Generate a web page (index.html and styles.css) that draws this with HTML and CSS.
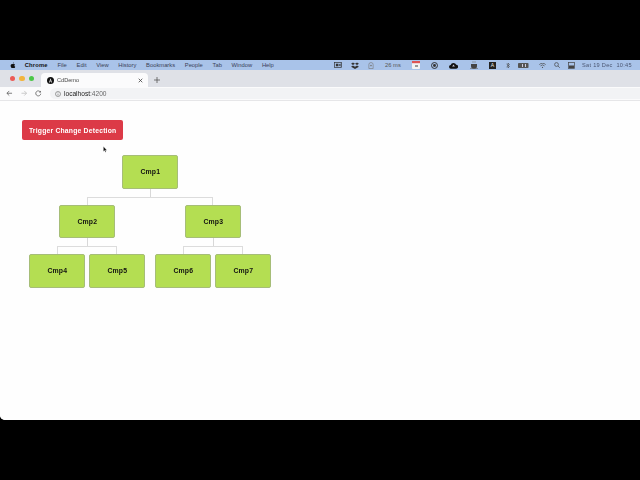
FILE: index.html
```html
<!DOCTYPE html>
<html lang="en">
<head>
<meta charset="utf-8">
<title>CdDemo</title>
<link rel="stylesheet" href="styles.css">
</head>
<body>
<div class="window">
  <header class="menubar">
    <nav class="menu">
      <svg class="apple" viewBox="0 0 14 16"><path d="M10 1c.1 1.300-1.200 2.900-2.800 2.800C7 2.500 8.500 1.100 10 1zM11.300 8.500c0-1.500 1.200-2.300 1.300-2.400-.8-1.100-2-1.300-2.400-1.300-1-.1-2 .6-2.600.6s-1.400-.6-2.300-.6C4 4.800 2.900 5.500 2.200 6.600.9 8.800 1.900 12.100 3.200 13.900c.6.900 1.300 1.900 2.300 1.900.9 0 1.300-.6 2.400-.6s1.400.6 2.400.6 1.600-.9 2.200-1.800c.7-1 1-2 1-2.100-.1 0-2.200-.8-2.200-3.400z"/></svg>
      <b class="app">Chrome</b>
      <span>File</span><span>Edit</span><span>View</span><span>History</span><span>Bookmarks</span><span>People</span><span>Tab</span><span>Window</span><span>Help</span>
    </nav>
    <div class="status">
      <svg class="s-video" viewBox="0 0 9 7"><rect x=".5" y=".5" width="8" height="6" fill="none" stroke="#333" stroke-width=".8"/><rect x="2" y="2" width="3" height="3" fill="#333"/><path d="M6 2.500l1.500-.7v3.400L6 4.500z" fill="#333"/></svg>
      <svg class="s-drop" viewBox="0 0 9 8"><path d="M2.200.5L4.500 2 2.200 3.500 0 2zM6.800.5L9 2 6.800 3.500 4.500 2zM2.200 3.900L4.500 5.300 6.800 3.900 9 5.300 4.500 8 0 5.300z" fill="#333"/></svg>
      <svg class="s-gauge" viewBox="0 0 7 8"><path d="M1 7.500V3a2.500 2.500 0 0 1 5 0v4.500z" fill="none" stroke="#777" stroke-width=".7"/><circle cx="3.500" cy="4" r="1" fill="#777"/></svg>
      <span class="ms">26 ms</span>
      <svg class="s-cal" viewBox="0 0 8 8"><rect width="8" height="8" rx="1" fill="#f4f4f4"/><rect width="8" height="2.200" fill="#d55"/><rect x="3" y="4" width="3" height="2" fill="#999"/></svg>
      <svg class="s-circle" viewBox="0 0 8 8"><circle cx="4" cy="4" r="3.400" fill="none" stroke="#222" stroke-width="1"/><circle cx="4" cy="4" r="1.700" fill="#333"/></svg>
      <svg class="s-cloud" viewBox="0 0 10 7"><path d="M2.200 7a2 2 0 0 1-.3-4A3.200 3.200 0 0 1 8 2.800 2.100 2.100 0 0 1 8 7z" fill="#111"/><path d="M5 2.500L3.500 4.500h3z" fill="#ccd"/></svg>
      <svg class="s-cup" viewBox="0 0 8 8"><path d="M1 3h6v2a3 3 0 0 1-6 0z" fill="#444"/><path d="M0 7.500h8" stroke="#666" stroke-width=".6"/><path d="M3 0v2M5 0v2" stroke="#777" stroke-width=".6"/></svg>
      <span class="s-a">A</span>
      <svg class="s-bt" viewBox="0 0 4 7"><path d="M.5 2l3 2.500L2 6V1l1.500 1.500-3 2.500" fill="none" stroke="#444" stroke-width=".6"/></svg>
      <svg class="s-batt" viewBox="0 0 11 5"><rect width="10.500" height="5" rx=".8" fill="#555"/><rect x="4" y="1" width="1" height="3" fill="#ccd"/><rect x="7" y="1" width="1" height="3" fill="#ccd"/></svg>
      <svg class="s-wifi" viewBox="0 0 7 5"><path d="M.3 1.600a4.500 4.500 0 0 1 6.400 0M1.500 2.900a2.800 2.800 0 0 1 4 0" fill="none" stroke="#444" stroke-width=".7"/><circle cx="3.500" cy="4.300" r=".6" fill="#444"/></svg>
      <svg class="s-search" viewBox="0 0 6 6"><circle cx="2.500" cy="2.500" r="1.900" fill="none" stroke="#444" stroke-width=".7"/><path d="M4 4l1.800 1.800" stroke="#444" stroke-width=".7"/></svg>
      <svg class="s-ctrl" viewBox="0 0 7 7"><rect x=".4" y=".4" width="6.200" height="6.200" fill="none" stroke="#444" stroke-width=".7"/><rect x="1" y="3.500" width="5" height="2.500" fill="#444"/></svg>
      <span class="clock">Sat 19 Dec  10:45</span>
    </div>
  </header>
  <div class="tabstrip">
    <div class="lights"><i class="red"></i><i class="amber"></i><i class="green"></i></div>
    <div class="tab">
      <svg class="favicon" viewBox="0 0 7 7"><circle cx="3.500" cy="3.500" r="3.500" fill="#111"/><path d="M3.500 1.300L2 5.500h.8l.3-.9h.9l.3.9h.8zM3.300 4l.2-.9.2.9z" fill="#eee"/></svg>
      <span class="tab-title">CdDemo</span>
      <svg class="tab-x" viewBox="0 0 5 5"><path d="M.7.7l3.600 3.600M4.300.7L.7 4.300" stroke="#444" stroke-width=".8"/></svg>
    </div>
    <svg class="tab-plus" viewBox="0 0 6 6"><path d="M3 0v6M0 3h6" stroke="#555" stroke-width=".8"/></svg>
  </div>
  <div class="toolbar">
    <svg class="nav back" viewBox="0 0 7 7"><path d="M6.500 3.500H1M3.500 1L1 3.500 3.500 6" fill="none" stroke="#555" stroke-width=".8"/></svg>
    <svg class="nav fwd" viewBox="0 0 7 7"><path d="M.5 3.500H6M3.500 1L6 3.500 3.500 6" fill="none" stroke="#bbb" stroke-width=".8"/></svg>
    <svg class="nav reload" viewBox="0 0 7 7"><path d="M5.800 2.200A2.700 2.700 0 1 0 6.200 4" fill="none" stroke="#555" stroke-width=".8"/><path d="M6.300.8v2H4.300z" fill="#555"/></svg>
    <div class="omnibox">
      <svg class="info" viewBox="0 0 6 6"><circle cx="3" cy="3" r="2.500" fill="none" stroke="#666" stroke-width=".6"/><path d="M3 2.700v1.800M3 1.500v.6" stroke="#666" stroke-width=".6"/></svg>
      <span class="url"><b>localhost</b>:4200</span>
    </div>
  </div>
  <main class="page">
    <button class="trigger">Trigger Change Detection</button>
    <div class="tree">
      <div class="branch">
        <div class="node">Cmp1</div>
        <div class="stem"></div>
        <div class="rail rail-wide"></div>
        <div class="kids kids-wide">
          <div class="branch">
            <div class="node">Cmp2</div>
            <div class="stem"></div>
            <div class="rail"></div>
            <div class="kids">
              <div class="node">Cmp4</div>
              <div class="node">Cmp5</div>
            </div>
          </div>
          <div class="branch">
            <div class="node">Cmp3</div>
            <div class="stem"></div>
            <div class="rail"></div>
            <div class="kids">
              <div class="node">Cmp6</div>
              <div class="node">Cmp7</div>
            </div>
          </div>
        </div>
      </div>
    </div>
    <svg class="cursor" viewBox="0 0 6 8"><path d="M.5.500v6l1.400-1.300 1 2.200.9-.4-1-2.100h1.900z" fill="#111" stroke="#fff" stroke-width=".3"/></svg>
  </main>
</div>
</body>
</html>
```

FILE: styles.css
```css
html, body {
  margin: 0;
  height: 100%;
  background: #000;
  overflow: hidden;
}
body {
  padding-top: 60px;
  box-sizing: border-box;
  font-family: "Liberation Sans", Arial, sans-serif;
}
.window {
  width: 640px;
  height: 360px;
  display: flex;
  flex-direction: column;
  background: #fff;
  border-radius: 0 0 0 5px;
  overflow: hidden;
  filter: blur(0.4px);
}

/* macOS menu bar */
.menubar {
  height: 10px;
  flex: none;
  background: #a9c3e9;
  display: flex;
  align-items: center;
  justify-content: space-between;
  font-size: 5.800px;
  color: #3a4258;
}
.menu {
  display: flex;
  align-items: center;
  padding-left: 10px;
  gap: 9.700px;
}
.apple { width: 5.500px; height: 6.500px; fill: #111; margin-right: -0.500px; }
.app { color: #111; letter-spacing: 0.200px; }
.status {
  display: flex;
  align-items: center;
  padding-right: 7px;
}
.status svg, .s-a { flex: none; display: block; }
.s-video { width: 8px; height: 6px; margin-right: 9px; }
.s-drop { width: 8px; height: 7px; margin-right: 9px; }
.s-gauge { width: 6px; height: 7px; margin-right: 11px; }
.ms { width: 17px; color: #555; margin-right: 10px; white-space: nowrap; }
.s-cal { width: 8px; height: 8px; margin-right: 11px; }
.s-circle { width: 7px; height: 7px; margin-right: 11px; }
.s-cloud { width: 9px; height: 7px; margin-right: 12px; }
.s-cup { width: 8px; height: 8px; margin-right: 11px; }
.s-a {
  width: 7px;
  height: 7px;
  margin-right: 10px;
  background: #222;
  color: #eee;
  font-size: 5px;
  line-height: 7px;
  text-align: center;
}
.s-bt { width: 4px; height: 7px; margin-right: 8px; }
.s-batt { width: 11px; height: 5px; margin-right: 10px; }
.s-wifi { width: 7px; height: 5px; margin-right: 8px; }
.s-search { width: 6px; height: 6px; margin-right: 8px; }
.s-ctrl { width: 7px; height: 7px; margin-right: 7px; }
.clock { width: 51px; white-space: pre; color: #4a5570; font-size: 5.600px; letter-spacing: 0.300px; }

/* tab strip */
.tabstrip {
  height: 17px;
  flex: none;
  background: #dfe1e7;
  display: flex;
  align-items: flex-end;
}
.lights {
  display: flex;
  gap: 4px;
  padding: 0 0 6px 9.500px;
  width: 31px;
  box-sizing: border-box;
}
.lights i { width: 5.500px; height: 5.500px; border-radius: 50%; flex: none; }
.red { background: #ec5a55; }
.amber { background: #f2b53d; }
.green { background: #4cc748; }
.tab {
  margin-left: 10px;
  width: 107px;
  height: 14px;
  box-sizing: border-box;
  background: #fbfbfc;
  border-radius: 4px 4px 0 0;
  display: flex;
  align-items: center;
  padding: 0 5px 0 6px;
}
.favicon { width: 7px; height: 7px; flex: none; }
.tab-title { margin-left: 3px; font-size: 5.600px; color: #444; flex: 1; }
.tab-x { width: 5px; height: 5px; flex: none; }
.tab-plus { width: 6px; height: 6px; flex: none; margin: 0 0 4px 6px; }

/* address bar */
.toolbar {
  height: 14px;
  flex: none;
  box-sizing: border-box;
  background: #fbfbfc;
  border-bottom: 1px solid #e6e6e8;
  display: flex;
  align-items: center;
  padding-left: 6px;
}
.nav { width: 6.500px; height: 6.500px; flex: none; margin-right: 8px; }
.omnibox {
  flex: 1;
  height: 11px;
  background: #f2f3f5;
  border-radius: 6px 0 0 6px;
  display: flex;
  align-items: center;
  padding-left: 5px;
}
.info { width: 6px; height: 6px; flex: none; }
.url { margin-left: 3.500px; font-size: 6.600px; color: #666; }
.url b { font-weight: normal; color: #222; }

/* page */
.page {
  flex: 1;
  position: relative;
  background: #fefefe;
  padding: 19.300px 0 0 22.300px;
}
.trigger {
  display: block;
  width: 100.700px;
  height: 19.700px;
  padding: 0;
  border: 0;
  border-radius: 2px;
  background: #dc3a47;
  color: #fff;
  font: bold 6.800px "Liberation Sans", Arial, sans-serif;
  letter-spacing: 0.200px;
}
.tree {
  display: flex;
  margin: 15.200px 0 0 7px;
}
.branch {
  display: flex;
  flex-direction: column;
  align-items: center;
}
.node {
  width: 56px;
  height: 33.500px;
  box-sizing: border-box;
  flex: none;
  background: #b4de52;
  border: 0.700px solid #a6bd78;
  border-radius: 2px;
  display: flex;
  align-items: center;
  justify-content: center;
  font-size: 6.900px;
  letter-spacing: 0.150px;
  font-weight: bold;
  color: #111;
}
.stem {
  width: 1px;
  height: 8px;
  background: #d8d8d8;
  flex: none;
}
.rail {
  align-self: stretch;
  margin: 0 28px;
  height: 8px;
  flex: none;
  box-sizing: border-box;
  border: 1px solid #dcdcdc;
  border-bottom: 0;
}
.rail-wide { margin: 0 58px; }
.kids { display: flex; gap: 4px; }
.kids-wide { gap: 10px; }
.cursor {
  position: absolute;
  left: 102.500px;
  top: 45px;
  width: 5px;
  height: 7px;
}
```
